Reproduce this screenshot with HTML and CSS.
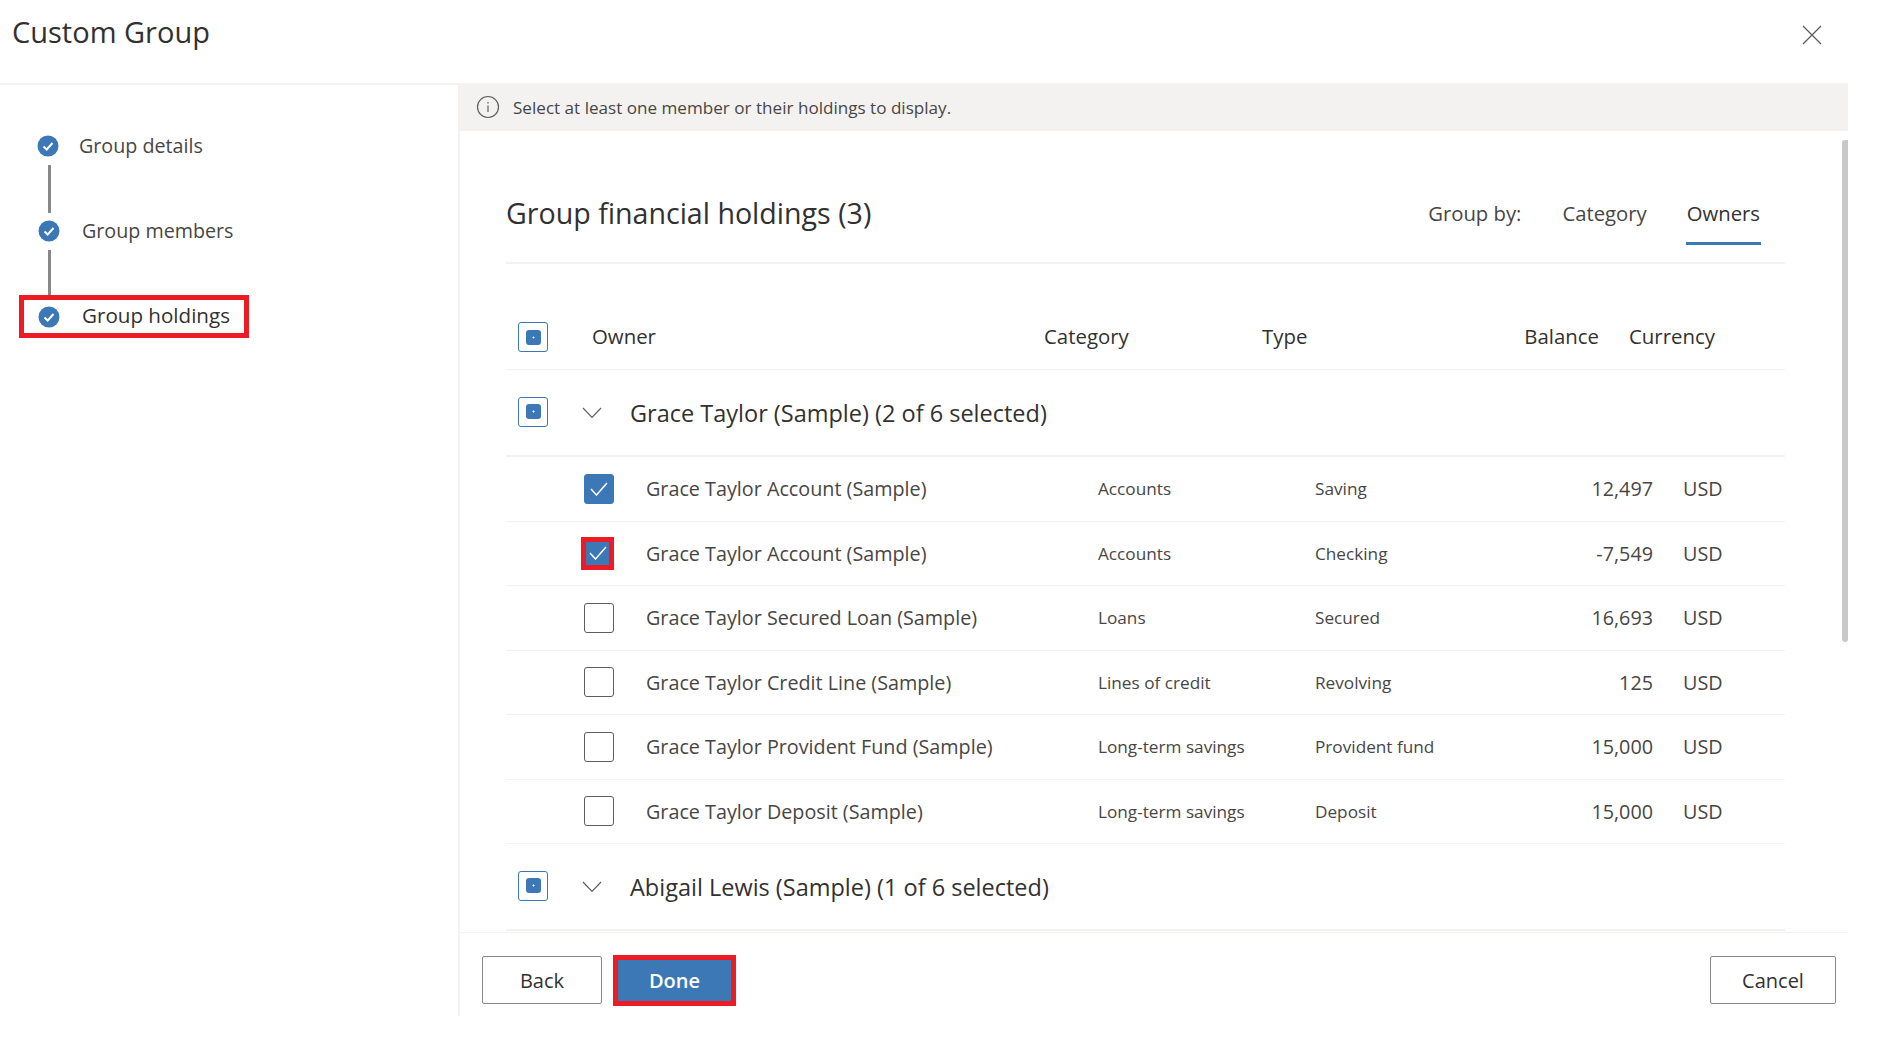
FILE: index.html
```html
<!doctype html>
<html>
<head>
<meta charset="utf-8">
<title>Custom Group</title>
<link rel="stylesheet" href="styles.css">
</head>

<body>
<div class="header">
	<h1>Custom Group</h1>
	<svg class="close" width="20" height="20" viewBox="0 0 20 20"><path d="M1 1L19 19M19 1L1 19"/></svg>
</div>
<div class="main">
	<div class="sidebar">
		<div class="step step_first">
			<svg class="step_icon" width="22" height="22" viewBox="0 0 22 22"><circle cx="11" cy="11" r="10.5"/><path d="M6.5 11.5L9.7 14.5L15.5 8"/></svg>
			<span>Group details</span>
		</div>
		<div class="step_line"></div>
		<div class="step">
			<svg class="step_icon" width="22" height="22" viewBox="0 0 22 22"><circle cx="11" cy="11" r="10.5"/><path d="M6.5 11.5L9.7 14.5L15.5 8"/></svg>
			<span>Group members</span>
		</div>
		<div class="step_line step_line_last"></div>
		<div class="step step_active">
			<svg class="step_icon" width="22" height="22" viewBox="0 0 22 22"><circle cx="11" cy="11" r="10.5"/><path d="M6.5 11.5L9.7 14.5L15.5 8"/></svg>
			<span>Group holdings</span>
		</div>
	</div>
	<div class="content">
		<div class="info">
			<svg class="info_icon" width="24" height="24" viewBox="0 0 24 24"><circle cx="12" cy="12" r="10.5"/><path d="M12 10.5V17M12 7V8.4"/></svg>
			<span>Select at least one member or their holdings to display.</span>
		</div>
		<div class="scroll">
			<div class="scrollbar"></div>
			<div class="title_bar">
				<h2>Group financial holdings (3)</h2>
				<div class="tabs">
					<span class="tabs_label">Group by:</span>
					<span class="tab">Category</span>
					<span class="tab tab_on">Owners</span>
				</div>
			</div>
			<div class="table_head">
				<span class="box box_mixed"></span>
				<span>Owner</span>
				<span>Category</span>
				<span>Type</span>
				<span class="num">Balance</span>
				<span>Currency</span>
			</div>
			<div class="group">
				<span class="box box_mixed"></span>
				<svg class="chevron" width="20" height="12" viewBox="0 0 20 12"><path d="M1 1L10 10.5L19 1"/></svg>
				<span>Grace Taylor (Sample) (2 of 6 selected)</span>
			</div>
			<div class="row">
				<span class="box box_checked"><svg width="18" height="14" viewBox="0 0 18 14"><path d="M1 7L6.5 13L17 1"/></svg></span>
				<span class="name">Grace Taylor Account (Sample)</span>
				<span class="small">Accounts</span>
				<span class="small">Saving</span>
				<span class="num">12,497</span>
				<span>USD</span>
			</div>
			<div class="row">
				<span class="box_red"><svg width="18" height="14" viewBox="0 0 18 14"><path d="M1 7L6.5 13L17 1"/></svg></span>
				<span class="name">Grace Taylor Account (Sample)</span>
				<span class="small">Accounts</span>
				<span class="small">Checking</span>
				<span class="num">-7,549</span>
				<span>USD</span>
			</div>
			<div class="row">
				<span class="box"></span>
				<span class="name">Grace Taylor Secured Loan (Sample)</span>
				<span class="small">Loans</span>
				<span class="small">Secured</span>
				<span class="num">16,693</span>
				<span>USD</span>
			</div>
			<div class="row">
				<span class="box"></span>
				<span class="name">Grace Taylor Credit Line (Sample)</span>
				<span class="small">Lines of credit</span>
				<span class="small">Revolving</span>
				<span class="num">125</span>
				<span>USD</span>
			</div>
			<div class="row">
				<span class="box"></span>
				<span class="name">Grace Taylor Provident Fund (Sample)</span>
				<span class="small">Long-term savings</span>
				<span class="small">Provident fund</span>
				<span class="num">15,000</span>
				<span>USD</span>
			</div>
			<div class="row">
				<span class="box"></span>
				<span class="name">Grace Taylor Deposit (Sample)</span>
				<span class="small">Long-term savings</span>
				<span class="small">Deposit</span>
				<span class="num">15,000</span>
				<span>USD</span>
			</div>
			<div class="group">
				<span class="box box_mixed"></span>
				<svg class="chevron" width="20" height="12" viewBox="0 0 20 12"><path d="M1 1L10 10.5L19 1"/></svg>
				<span>Abigail Lewis (Sample) (1 of 6 selected)</span>
			</div>
		</div>
		<div class="footer">
			<button class="btn btn_back">Back</button>
			<button class="btn btn_done">Done</button>
			<button class="btn btn_cancel">Cancel</button>
		</div>
	</div>
</div>
</body>
</html>
```

FILE: styles.css
```css
body {margin: 0; height: 1059px; overflow: hidden; background: #fff; color: #323130; font-family: "Open Sans", "Noto Sans", sans-serif;}
svg {display: block; fill: none;}

.header {height: 83px; display: flex; justify-content: space-between; padding: 0 56px 0 12px;}
.header h1 {margin: 14px 0 0; font-size: 29px; line-height: 36px; font-weight: 500;}
.close {margin: 25px 0 0 0; stroke: #605e5c; stroke-width: 1.3;}

.main {display: flex; height: 933px;}

.sidebar {width: 460px; box-sizing: border-box; border-top: 2px solid #f3f2f1; border-right: 2px solid #f3f2f1; padding: 47px 0 0 38px; flex: none;}
.step {display: flex; align-items: center; height: 28px; font-size: 19.7px; color: #484644; gap: 22px;}
.step span {margin-top: -2px;}
.step_first {margin-left: -1px; gap: 20px;}
.step_icon circle {fill: #3b78b5;}
.step_icon path {stroke: #fff; stroke-width: 2;}
.step_line {width: 3px; height: 48px; margin: 5px 0 4px 10px; background: #8a8886;}
.step_line_last {height: 45px; margin-bottom: 0;}
.step_active {box-sizing: border-box; width: 230px; height: 43px; margin-left: -19px; padding-left: 14px; border: 5px solid #ed1c24; font-size: 20.6px; font-weight: 500; color: #323130;}
.step_active span {margin-top: -4px;}

.content {flex: 1; min-width: 0; display: flex; flex-direction: column; padding-right: 30px;}
.info {height: 48px; flex: none; display: flex; align-items: center; gap: 13px; padding-left: 16px; background: #f3f2f1; font-size: 17.1px; color: #484644;}
.info_icon {stroke: #605e5c; stroke-width: 1.2;}

.scroll {position: relative; height: 801px; padding: 0 63px 0 46px; overflow: hidden; flex: none;}
.scrollbar {position: absolute; right: 0; top: 9px; width: 6px; height: 502px; background: #c8c8c8; border-radius: 3px 0 3px 3px;}

.title_bar {height: 131px; border-bottom: 2px solid #f3f2f1; display: flex; justify-content: space-between; align-items: flex-end;}
.title_bar h2 {margin: 0 0 29px; font-size: 28.6px; line-height: 40px; font-weight: 400;}
.tabs {display: flex; align-items: flex-start; margin: 0 24px 17px 0; font-size: 20.3px; line-height: 38px; color: #484644;}
.tabs_label {margin-right: 41px; margin-top: -1px;}
.tab {margin-top: -1px; margin-right: 39px; padding-bottom: 13px;}
.tab_on {margin-right: 0; padding: 0 1px 10px; font-weight: 500; color: #323130; border-bottom: 3px solid #3b78b5;}

.box {width: 30px; height: 30px; box-sizing: border-box; border: 1px solid #605e5c; border-radius: 3px; display: flex; align-items: center; justify-content: center;}
.box_mixed {flex: none; border-color: #3b78b5;}
.box_mixed:before {content: ""; width: 15px; height: 15px; border-radius: 3px; background: radial-gradient(circle, #fff 0.8px, #3b78b5 1.2px);}
.box_checked {background: #3b78b5; border-color: #3b78b5;}
.box_red {width: 33px; height: 33px; margin-left: -3px; box-sizing: border-box; border: 5px solid #ed1c24; background: #3b78b5; display: flex; align-items: center; justify-content: center;}
.box_checked path, .box_red path {stroke: #fff; stroke-width: 1.5;}

.table_head {display: grid; grid-template-columns: 74px 452px 218px 260px 107px auto; align-items: center; height: 66px; margin-top: 39px; padding-left: 12px; border-bottom: 1px solid #f3f2f1; font-size: 20.4px; font-weight: 500;}
.table_head .box {margin-top: 2px;}
.num {text-align: right; padding-right: 30px;}

.group {height: 85px; padding-left: 12px; display: flex; align-items: center; border-bottom: 2px solid #f3f2f1; font-size: 23.5px; font-weight: 500;}
.group .box {margin-top: -2px;}
.chevron {flex: none; margin: 0 28px 0 34px; stroke: #605e5c; stroke-width: 1.2;}

.row {display: grid; grid-template-columns: 62px 452px 217px 230px 138px auto; align-items: center; height: 64.5px; box-sizing: border-box; padding-left: 78px; border-bottom: 1px solid #f3f2f1; font-size: 19.75px; color: #484644;}
.small {font-size: 17.2px;}

.footer {display: flex; align-items: flex-start; padding: 23px 12px 0 22px; height: 60px; border-top: 1px solid #f3f2f1; flex: none;}
.btn {height: 48px; box-sizing: border-box; border: 1px solid #8a8886; border-radius: 2px; background: #fff; color: #323130; font-family: inherit; font-size: 20px; font-weight: 500;}
.btn_back {width: 120px;}
.btn_done {width: 123px; height: 51px; margin: -1px 0 0 11px; border: 5px solid #ed1c24; border-radius: 0; background: #3b78b5; color: #fff; font-weight: 600;}
.btn_cancel {width: 126px; margin-left: auto;}
```
